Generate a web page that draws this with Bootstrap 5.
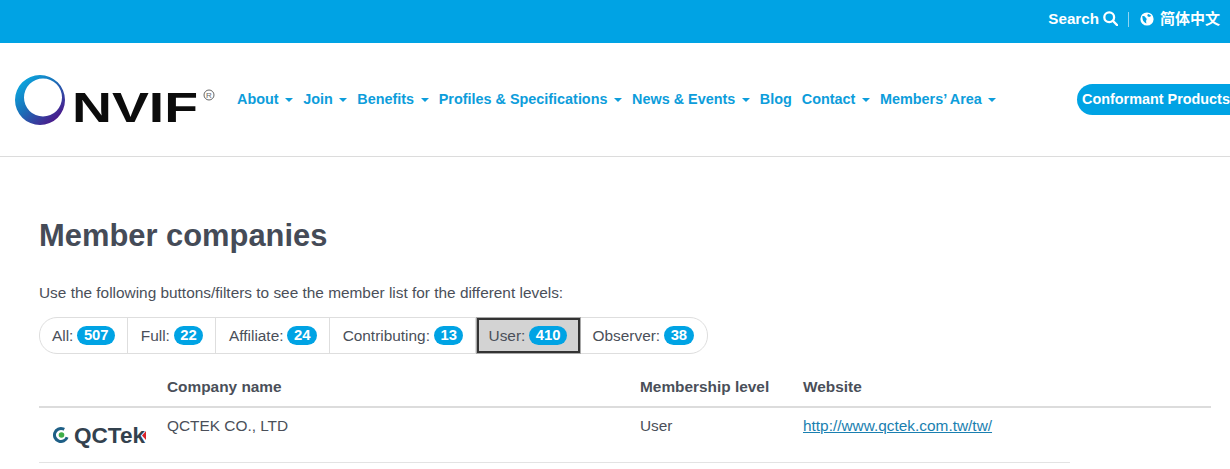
<!DOCTYPE html>
<html lang="en">
<head>
<meta charset="utf-8">
<title>Member companies</title>
<link href="https://cdn.jsdelivr.net/npm/bootstrap@5.3.0/dist/css/bootstrap.min.css" rel="stylesheet">
<style>
html,body{height:469px;overflow:hidden}
body{font-family:"Liberation Sans",Arial,sans-serif;color:#4a4f59;background:#fff;font-size:15.4px}
.topstrip{height:43px;background:#00a3e4;color:#fff;font-weight:700;font-size:15.2px;padding:0 10px 5px 0}
.topstrip a{color:#fff;text-decoration:none}
.topstrip .sepbar{width:1px;height:15px;background:#8fd5f3;margin:0 11px 0 10px}
.globeicon{margin-right:6px}
.cjk{font-family:"Liberation Sans","Noto Sans CJK SC",sans-serif;font-size:15px;letter-spacing:0;font-weight:700}
.mainbar{height:114px;border-bottom:1px solid #dcdcdc;width:1230px;flex-wrap:nowrap}
.brandbox{width:237px;padding-left:14px;flex:none}
.brandbox svg{display:block}
.menu-row{gap:10px;flex:none}
.menu-row a{color:#0d9ddb;font-weight:700;font-size:14.4px;text-decoration:none;white-space:nowrap;display:flex;align-items:center}
.caret{display:inline-block;border-left:4px solid transparent;border-right:4px solid transparent;border-top:4px solid #0d9ddb;margin-left:6.6px;margin-top:2px}
.pillbtn{position:absolute;left:1077px;top:84px;height:31px;width:170px;border-radius:16px;background:#00a3e4;color:#fff;font-weight:700;font-size:14.4px;padding:0 5px;line-height:30px;white-space:nowrap;text-decoration:none}
.content{padding:58px 19px 0 39px}
.pagetitle{font-size:30.9px;font-weight:700;color:#454b57;margin:0;line-height:41px}
.intro{margin:27px 0 0;line-height:20px;color:#4a4f59}
.filterbar{display:inline-flex;height:37px;margin-top:14px;border:1px solid #dedede;border-radius:18px;color:#4a4f59}
.fitem{display:flex;align-items:center;padding:0 11.7px 0 13px;border-right:1px solid #dedede;gap:4px;white-space:nowrap}
.fitem:first-child{padding-left:12px}
.fitem:last-child{border-right:0;padding-right:13px}
.fitem.chosen{background:#d3d3d3;border:2px solid #333;outline:1px solid #a8a8a8;padding:0 10.5px 0 10px;margin-left:.5px}
.cnt{background:#00a3e4;color:#fff;font-weight:700;border-radius:10px;height:19px;line-height:19px;padding:0 6.5px;font-size:14.8px}
.memtable{width:1172px;margin-top:14px;table-layout:fixed;border-collapse:collapse;color:#4a4f59}
.memtable th{font-weight:700;height:39px;border-bottom:2px solid #dcdcdc;vertical-align:middle;padding:0}
.memtable td{height:55px;vertical-align:top;padding:6px 0 0}
.rowline{width:1031px;height:1px;background:#e3e3e3}
.memtable a{color:#1a7fb0}
.qclogo{display:block;margin:7px 0 0 14px}
</style>
</head>
<body>
<div class="topstrip d-flex align-items-center justify-content-end">
  <a href="#" class="d-flex align-items-center">Search
    <svg class="ms-1" width="15" height="15" viewBox="0 0 15 15" fill="none" stroke="#fff" stroke-width="2.3"><circle cx="6.2" cy="6.2" r="4.9"/><path d="M9.8 9.8l4.3 4.3" stroke-linecap="round"/></svg>
  </a>
  <span class="sepbar"></span>
  <a href="#" class="d-flex align-items-center">
    <svg class="globeicon" width="14" height="14" viewBox="0 0 14 14"><circle cx="7" cy="7" r="6.6" fill="#fff"/><path d="M2.2 4.2c1.4-.5 2.6-.2 3 .9.3.9 1.4 1 1.5 2 .1.9-.7 1.200-.6 2.300l.3 2c-2-.6-3.300-2-3.700-3.800zM8 1.900c1.300.1 2.500.9 3.300 2-.7.6-1.700.5-2.200 1.100-.6-.4-1.500-.5-1.700-1.300-.1-.8.300-1.300.6-1.800z" fill="#00a3e4"/></svg>
    <span class="cjk">简体中文</span>
  </a>
</div>
<nav class="mainbar d-flex align-items-center">
  <div class="brandbox">
    <svg width="203" height="60" viewBox="0 -4 203 60">
      <defs>
        <linearGradient id="ring" x1=".05" y1=".2" x2=".75" y2=".95">
          <stop offset="0" stop-color="#0ba6de"/><stop offset=".45" stop-color="#1b6fb8"/><stop offset="1" stop-color="#4a1b8c"/>
        </linearGradient>
      </defs>
      <path fill="url(#ring)" fill-rule="evenodd" d="M1 26a25 25 0 1 0 50 0a25 25 0 1 0-50 0zM10 23.500a19 19 0 1 0 38 0a19 19 0 1 0-38 0z"/>
      <text x="58" y="48" font-family="Liberation Sans" font-weight="700" font-size="42" fill="#0c0c0c" textLength="126" lengthAdjust="spacingAndGlyphs">NVIF</text>
      <circle cx="195" cy="21" r="5" fill="none" stroke="#666" stroke-width="1"/>
      <text x="195" y="24" text-anchor="middle" font-family="Liberation Sans" font-size="8" fill="#666">R</text>
    </svg>
  </div>
  <div class="menu-row d-flex">
    <a href="#">About<span class="caret"></span></a>
    <a href="#">Join<span class="caret"></span></a>
    <a href="#">Benefits<span class="caret"></span></a>
    <a href="#">Profiles &amp; Specifications<span class="caret"></span></a>
    <a href="#">News &amp; Events<span class="caret"></span></a>
    <a href="#">Blog</a>
    <a href="#">Contact<span class="caret"></span></a>
    <a href="#">Members’ Area<span class="caret"></span></a>
  </div>
  <a href="#" class="pillbtn">Conformant Products</a>
</nav>
<main class="content">
  <h1 class="pagetitle">Member companies</h1>
  <p class="intro">Use the following buttons/filters to see the member list for the different levels:</p>
  <div class="filterbar">
    <div class="fitem">All: <span class="cnt">507</span></div>
    <div class="fitem">Full: <span class="cnt">22</span></div>
    <div class="fitem">Affiliate: <span class="cnt">24</span></div>
    <div class="fitem">Contributing: <span class="cnt">13</span></div>
    <div class="fitem chosen">User: <span class="cnt">410</span></div>
    <div class="fitem">Observer: <span class="cnt">38</span></div>
  </div>
  <table class="memtable">
    <colgroup><col style="width:128px"><col style="width:473px"><col style="width:163px"><col></colgroup>
    <thead><tr><th></th><th>Company name</th><th>Membership level</th><th>Website</th></tr></thead>
    <tbody><tr>
      <td>
        <svg class="qclogo" width="100" height="28" viewBox="0 0 100 28">
          <circle cx="8" cy="14" r="6.500" fill="none" stroke="#1e5f86" stroke-width="3" stroke-dasharray="31 10" transform="rotate(20 8 14)"/>
          <circle cx="8.500" cy="14" r="2.800" fill="#3fae49"/>
          <text x="21" y="21.500" font-family="Liberation Sans" font-weight="700" font-size="22" fill="#33414e" textLength="71" lengthAdjust="spacingAndGlyphs">QCTek</text>
          <path d="M93 10l-4 4.500 4 4.500z" fill="#d8232a"/>
        </svg>
      </td>
      <td>QCTEK CO., LTD</td>
      <td>User</td>
      <td><a href="#">http://www.qctek.com.tw/tw/</a></td>
    </tr></tbody>
  </table>
  <div class="rowline"></div>
</main>
<script src="https://cdn.jsdelivr.net/npm/bootstrap@5.3.0/dist/js/bootstrap.bundle.min.js"></script>
</body>
</html>
